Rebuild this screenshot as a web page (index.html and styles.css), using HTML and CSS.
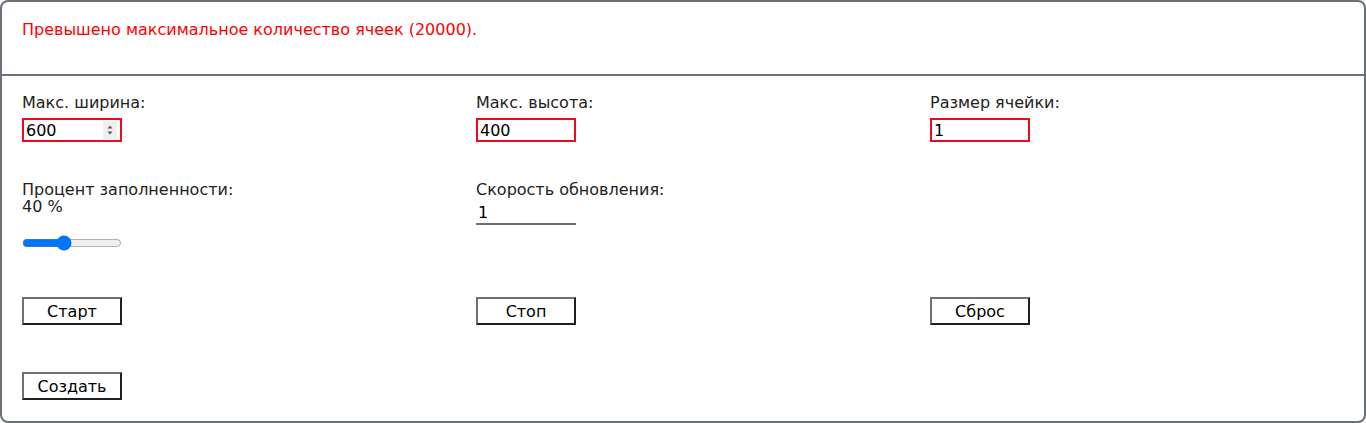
FILE: index.html
```html
<!DOCTYPE html>
<html lang="ru">
<head>
<meta charset="utf-8">
<link rel="stylesheet" href="styles.css">
</head>
<body>
<div class="panel">
  <div class="header">
    <p class="error">Превышено максимальное количество ячеек (20000).</p>
  </div>
  <div class="grid">
    <div class="row row1">
      <div class="cell">
        <label class="label">Макс. ширина:</label>
        <div class="field invalid number">
          <span class="value">600</span>
          <span class="spin">
            <svg width="14" height="18" viewBox="0 0 14 18"><path d="M4.5 7.5 L7 4.5 L9.5 7.5 Z M4.5 10.5 L7 13.5 L9.5 10.5 Z" fill="#555"/></svg>
          </span>
        </div>
      </div>
      <div class="cell">
        <label class="label">Макс. высота:</label>
        <div class="field invalid"><span class="value">400</span></div>
      </div>
      <div class="cell">
        <label class="label">Размер ячейки:</label>
        <div class="field invalid"><span class="value">1</span></div>
      </div>
    </div>
    <div class="row row2">
      <div class="cell">
        <label class="label tall">Процент заполненности:</label>
        <div class="label tall">40 %</div>
        <input class="range" type="range" min="0" max="100" value="40">
      </div>
      <div class="cell">
        <label class="label tall">Скорость обновления:</label>
        <div class="field underline"><span class="value">1</span></div>
      </div>
      <div class="cell"></div>
    </div>
    <div class="row row3">
      <div class="cell"><button class="btn">Старт</button></div>
      <div class="cell"><button class="btn">Стоп</button></div>
      <div class="cell"><button class="btn">Сброс</button></div>
    </div>
    <div class="row row4">
      <div class="cell"><button class="btn">Создать</button></div>
      <div class="cell"></div>
      <div class="cell"></div>
    </div>
  </div>
</div>
</body>
</html>
```

FILE: styles.css
```css
* { box-sizing: border-box; }
html, body { margin: 0; padding: 0; background: #fff; }
body {
  font-family: "DejaVu Sans", sans-serif;
  font-size: 16px;
  color: #222;
}
.panel {
  width: 1366px;
  height: 423px;
  border: 2px solid #6d7079;
  border-radius: 8px;
  overflow: hidden;
}
.header {
  height: 74px;
  padding: 18px 20px 0;
  border-bottom: 2px solid #6d7079;
}
.error {
  margin: 0;
  color: #ff0000;
  line-height: 19px;
}
.grid {
  padding-top: 19px;
}
.row {
  display: grid;
  grid-template-columns: repeat(3, 1fr);
}
.cell {
  padding-left: 20px;
  display: flex;
  flex-direction: column;
  align-items: flex-start;
}
.row2 { margin-top: 39px; height: 116px; }
.row4 { margin-top: 47px; }
.label {
  display: block;
  line-height: 16px;
  color: #222;
}
.label.tall { line-height: 17px; }
.field {
  width: 100px;
  height: 24px;
  display: flex;
  align-items: center;
  padding-left: 2px;
  color: #000;
}
.row1 .field { margin-top: 7px; }
.invalid { border: 2px solid #ee0a1e; }
.underline {
  margin-top: 3px;
  border-bottom: 2px solid #6d7079;
  padding-left: 2px;
}
.value { flex: 1; line-height: 19px; }
.spin {
  width: 14px;
  height: 18px;
  margin-right: 3px;
  background: #efefef;
  display: flex;
  align-items: center;
  justify-content: center;
}
.range {
  width: 100px;
  height: 16px;
  margin: 20px 0 0;
  padding: 0;
  accent-color: #0075ff;
}
.btn {
  width: 100px;
  height: 28px;
  margin: 0;
  padding: 0;
  background: #fff;
  font-family: "DejaVu Sans", sans-serif;
  font-size: 16px;
  color: #000;
  border: 2px solid;
  border-color: #6d7079 #1f1f1f #1f1f1f #6d7079;
}
```
